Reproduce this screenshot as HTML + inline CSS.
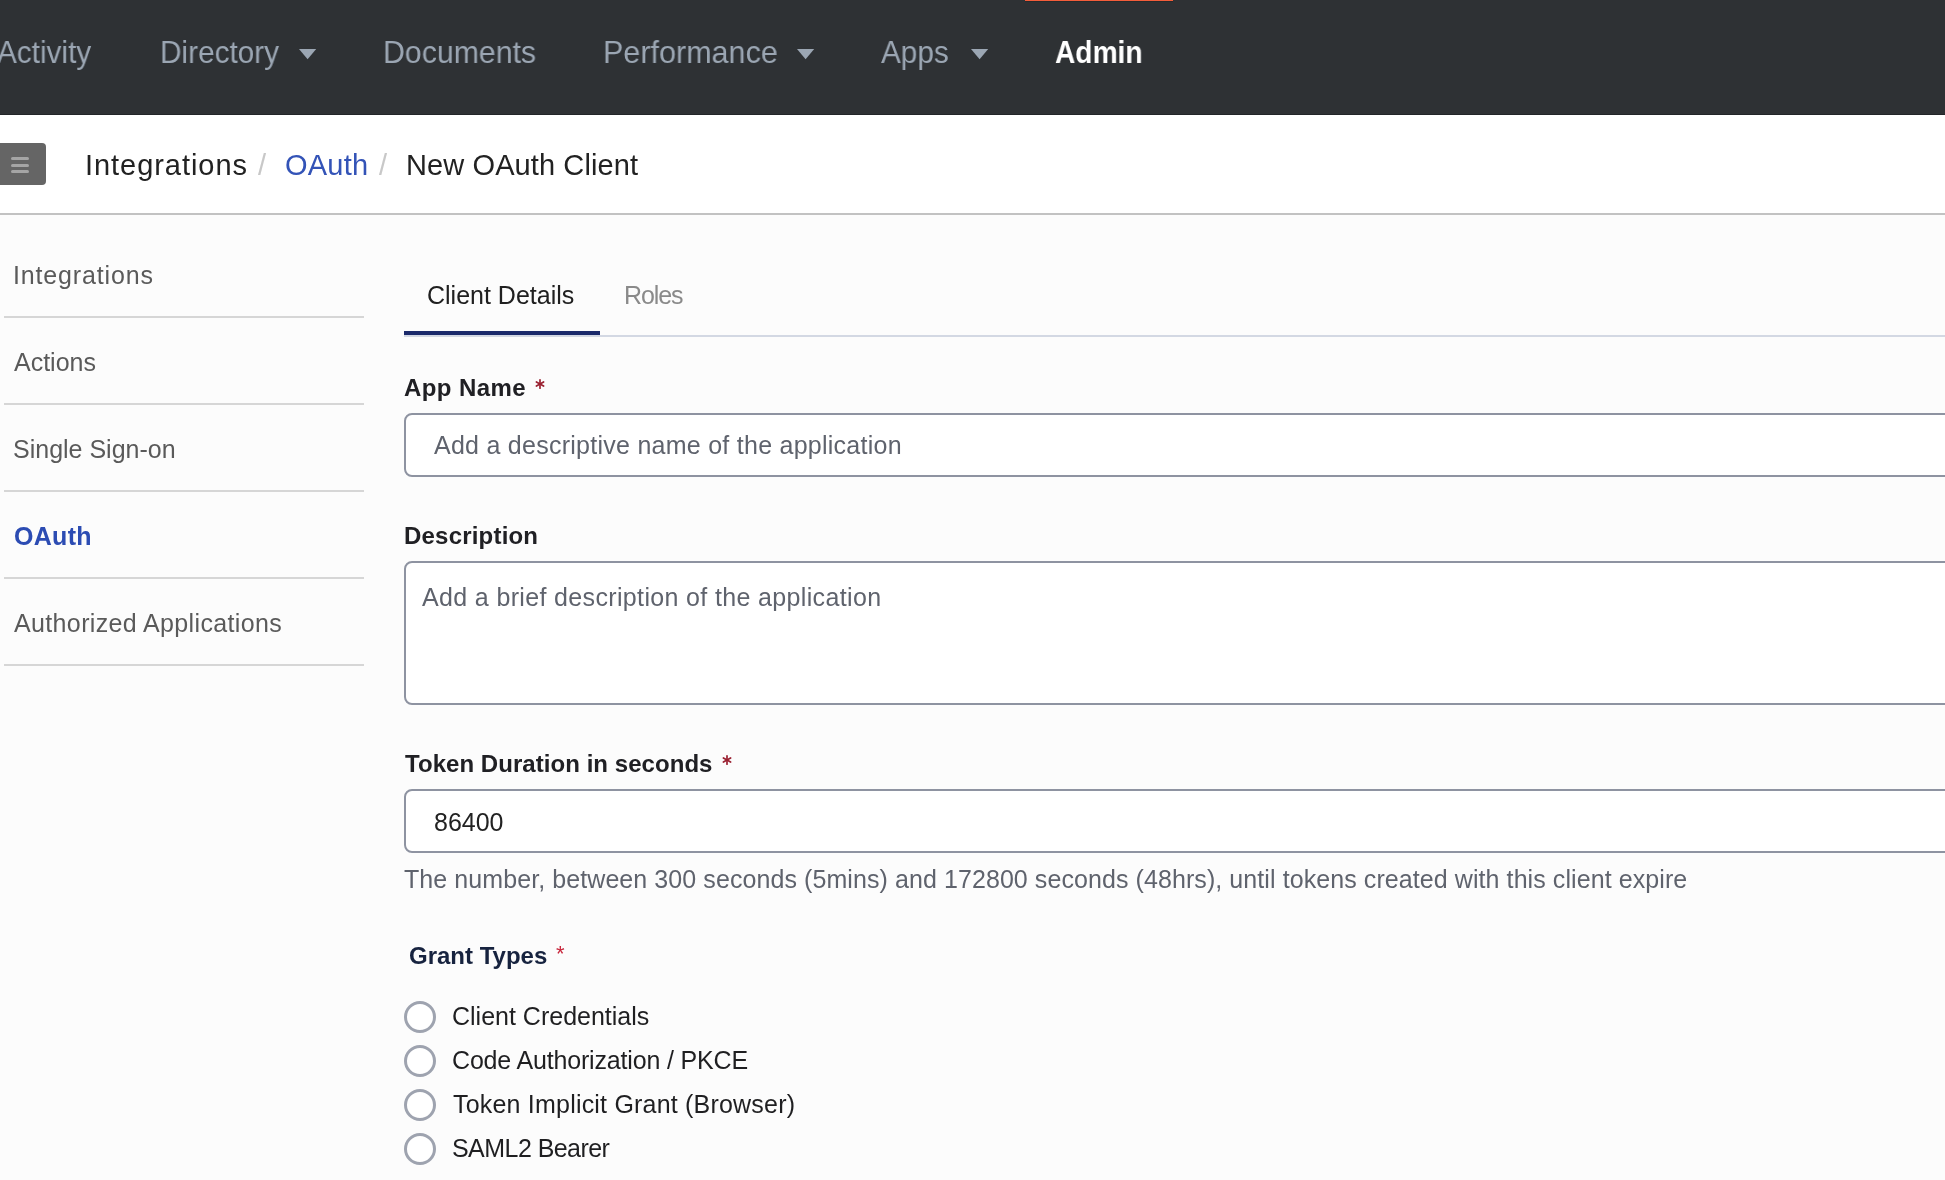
<!DOCTYPE html>
<html>
<head>
<meta charset="utf-8">
<style>
html,body{margin:0;padding:0;}
body{width:1945px;height:1180px;overflow:hidden;position:relative;background:#fcfcfc;font-family:"Liberation Sans",sans-serif;}
.a{position:absolute;white-space:nowrap;line-height:1;will-change:transform;}
#nav{position:absolute;left:0;top:0;width:1945px;height:114px;background:#2e3134;border-bottom:1px solid #222528;}
.nv{font-size:32px;color:#9ba6b3;transform-origin:0 0;}
.tri{position:absolute;width:0;height:0;border-left:8.5px solid transparent;border-right:8.5px solid transparent;border-top:10px solid #9ba6b3;}
#hdr{position:absolute;left:0;top:115px;width:1945px;height:98px;background:#fff;border-bottom:2px solid #c2c2c2;}
.bc{font-size:29px;color:#222;}
.sb{font-size:25px;color:#5a5a5a;}
.sdiv{position:absolute;left:4px;width:360px;height:2px;background:#d6d6d6;}
.lbl{font-size:24px;font-weight:bold;color:#202024;}
.ast{font-size:22px;color:#a3203a;}
.inp{position:absolute;left:404px;width:1600px;background:#fff;border:2px solid #8e93a1;border-radius:8px;box-sizing:border-box;}
.ph{font-size:25px;color:#5f636d;}
.radio{position:absolute;left:404px;width:32px;height:32px;border:3px solid #9ea3af;border-radius:50%;box-sizing:border-box;background:#fff;}
.rl{font-size:25px;color:#1f1f21;}
</style>
</head>
<body>
<div id="nav">
  <div style="position:absolute;left:1025px;top:0;width:148px;height:1px;background:#f45d3a;"></div><div style="position:absolute;left:1025px;top:1px;width:148px;height:1px;background:#252a2d;"></div>
  <div class="a nv" style="left:-3px;top:36px;transform:scaleX(0.93);">Activity</div>
  <div class="a nv" style="left:160px;top:36px;transform:scaleX(0.93);">Directory</div>
  <svg style="position:absolute;left:299px;top:49px;" width="18" height="11"><polygon points="0,0 17.2,0 8.6,10.2" fill="#9ba6b3"/></svg>
  <div class="a nv" style="left:383px;top:36px;transform:scaleX(0.946);">Documents</div>
  <div class="a nv" style="left:603px;top:36px;transform:scaleX(0.954);">Performance</div>
  <svg style="position:absolute;left:797px;top:49px;" width="18" height="11"><polygon points="0,0 17.2,0 8.6,10.2" fill="#9ba6b3"/></svg>
  <div class="a nv" style="left:881px;top:36px;transform:scaleX(0.928);">Apps</div>
  <svg style="position:absolute;left:971px;top:49px;" width="18" height="11"><polygon points="0,0 17.2,0 8.6,10.2" fill="#9ba6b3"/></svg>
  <div class="a nv" style="left:1055px;top:36px;color:#fff;font-weight:bold;transform:scaleX(0.88);">Admin</div>
</div>
<div id="hdr">
  <div style="position:absolute;left:0;top:28px;width:46px;height:42px;background:#656565;border-radius:0 4px 4px 0;">
    <div style="position:absolute;left:10.5px;top:14.2px;width:18.5px;height:3px;background:#a5a5a5;border-radius:1.5px;"></div>
    <div style="position:absolute;left:10.5px;top:20.6px;width:18.5px;height:3px;background:#a5a5a5;border-radius:1.5px;"></div>
    <div style="position:absolute;left:10.5px;top:26.9px;width:18.5px;height:3px;background:#a5a5a5;border-radius:1.5px;"></div>
  </div>
  <div class="a bc" style="left:85px;top:36px;letter-spacing:0.95px;">Integrations</div>
  <div class="a bc" style="left:258px;top:36px;color:#c8c8c8;">/</div>
  <div class="a bc" style="left:285px;top:36px;color:#3353b7;letter-spacing:0.2px;">OAuth</div>
  <div class="a bc" style="left:379px;top:36px;color:#c8c8c8;">/</div>
  <div class="a bc" style="left:406px;top:36px;letter-spacing:0.1px;">New OAuth Client</div>
</div>

<!-- sidebar -->
<div class="a sb" style="left:13px;top:263px;letter-spacing:0.85px;">Integrations</div>
<div class="sdiv" style="top:316px;"></div>
<div class="a sb" style="left:14px;top:350px;">Actions</div>
<div class="sdiv" style="top:403px;"></div>
<div class="a sb" style="left:13px;top:437px;">Single Sign-on</div>
<div class="sdiv" style="top:490px;"></div>
<div class="a sb" style="left:14px;top:524px;color:#2c4cb3;font-weight:bold;letter-spacing:0.3px;">OAuth</div>
<div class="sdiv" style="top:577px;"></div>
<div class="a sb" style="left:14px;top:611px;letter-spacing:0.36px;">Authorized Applications</div>
<div class="sdiv" style="top:664px;"></div>

<!-- tabs -->
<div style="position:absolute;left:404px;top:335px;width:1541px;height:2px;background:#d3d8e3;"></div>
<div style="position:absolute;left:404px;top:331px;width:196px;height:4px;background:#1b2a6b;"></div>
<div class="a" style="left:427px;top:283px;font-size:25px;color:#202020;">Client Details</div>
<div class="a" style="left:624px;top:283px;font-size:25px;color:#8a8a8a;letter-spacing:-1.1px;">Roles</div>

<!-- App Name -->
<div class="a lbl" style="left:404px;top:376px;letter-spacing:0.4px;">App Name</div>
<svg class="ast6" style="position:absolute;left:534px;top:377.5px;" width="12" height="12"><g stroke="#9b2232" stroke-width="1.7" stroke-linecap="round"><line x1="6" y1="1.8" x2="6" y2="10.2"/><line x1="2.4" y1="3.9" x2="9.6" y2="8.1"/><line x1="2.4" y1="8.1" x2="9.6" y2="3.9"/></g></svg>
<div class="inp" style="top:413px;height:64px;"></div>
<div class="a ph" style="left:434px;top:433px;letter-spacing:0.26px;">Add a descriptive name of the application</div>

<!-- Description -->
<div class="a lbl" style="left:404px;top:524px;letter-spacing:0.2px;">Description</div>
<div class="inp" style="top:561px;height:144px;"></div>
<div class="a ph" style="left:422px;top:585px;letter-spacing:0.35px;">Add a brief description of the application</div>

<!-- Token -->
<div class="a lbl" style="left:405px;top:752px;letter-spacing:0.05px;">Token Duration in seconds</div>
<svg class="ast6" style="position:absolute;left:721px;top:753.5px;" width="12" height="12"><g stroke="#9b2232" stroke-width="1.7" stroke-linecap="round"><line x1="6" y1="1.8" x2="6" y2="10.2"/><line x1="2.4" y1="3.9" x2="9.6" y2="8.1"/><line x1="2.4" y1="8.1" x2="9.6" y2="3.9"/></g></svg>
<div class="inp" style="top:789px;height:64px;"></div>
<div class="a" style="left:434px;top:810px;font-size:25px;color:#222;">86400</div>
<div class="a ph" style="left:404px;top:867px;letter-spacing:0.08px;">The number, between 300 seconds (5mins) and 172800 seconds (48hrs), until tokens created with this client expire</div>

<!-- Grant types -->
<div class="a lbl" style="left:409px;top:944px;color:#17233f;">Grant Types</div>
<div class="a ast" style="left:556px;top:943px;color:#c8263c;">*</div>
<div class="radio" style="top:1001px;"></div>
<div class="a rl" style="left:452px;top:1004px;">Client Credentials</div>
<div class="radio" style="top:1045px;"></div>
<div class="a rl" style="left:452px;top:1048px;letter-spacing:-0.17px;">Code Authorization / PKCE</div>
<div class="radio" style="top:1089px;"></div>
<div class="a rl" style="left:453px;top:1092px;letter-spacing:0.2px;">Token Implicit Grant (Browser)</div>
<div class="radio" style="top:1133px;"></div>
<div class="a rl" style="left:452px;top:1136px;letter-spacing:-0.55px;">SAML2 Bearer</div>
</body>
</html>
